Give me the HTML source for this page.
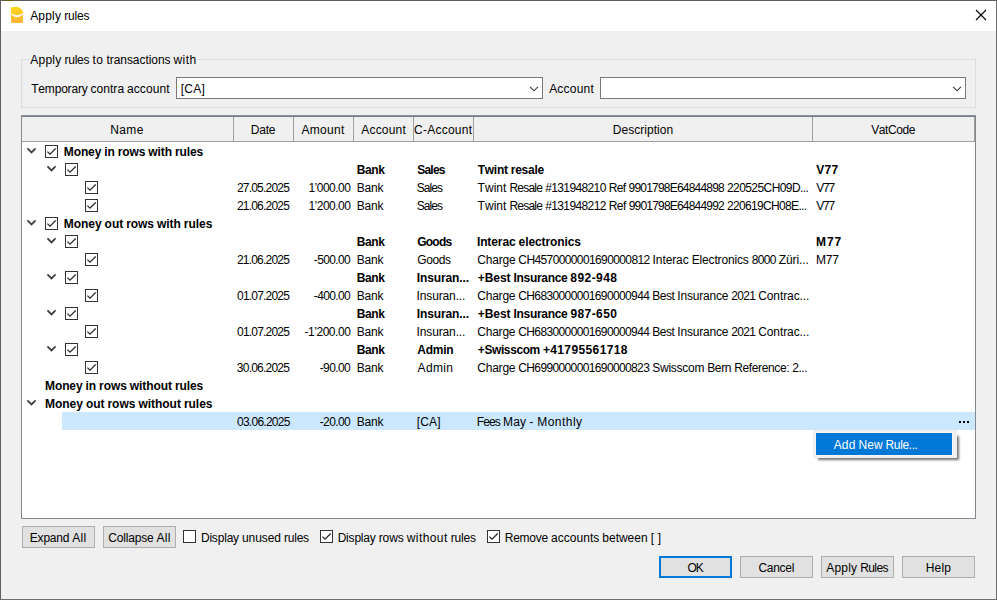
<!DOCTYPE html>
<html><head><meta charset="utf-8"><title>Apply rules</title>
<style>
html,body{margin:0;padding:0}
body{width:997px;height:600px;position:relative;overflow:hidden;background:#f0f0f0;font-family:"Liberation Sans",sans-serif;font-size:12.0px}
.a{position:absolute;display:block}
.t i{font-style:normal}
.t{font-kerning:none;position:absolute;white-space:pre;line-height:16px;height:16px;color:#000;transform-origin:0 0;font-family:"Liberation Sans",sans-serif;font-size:12.0px}
.btn{position:absolute;box-sizing:border-box;background:#e1e1e1;border:1px solid #adadad;height:22px;width:73px}
.combo{position:absolute;box-sizing:border-box;background:#fff;border:1px solid #7a7a7a;height:22px;top:77px}
.hs{position:absolute;top:117px;width:1px;height:24px;background:#a0a0a0}
</style></head><body>
<!-- window frame -->
<div class="a" style="left:0;top:0;width:997px;height:31px;background:#fff"></div>
<div class="a" style="left:0;top:0;width:997px;height:1px;background:#5c5c5c"></div>
<div class="a" style="left:4px;top:0;width:10px;height:1px;background:#6b5a12"></div>
<div class="a" style="left:0;top:0;width:1px;height:600px;background:#5f5f5f"></div>
<div class="a" style="left:996px;top:0;width:1px;height:600px;background:#6d6d6d"></div>
<div class="a" style="left:0;top:599px;width:997px;height:1px;background:#6d6d6d"></div>
<!-- app icon -->
<svg class="a" style="left:11px;top:7px" width="12" height="16" viewBox="0 0 12 16">
<defs><linearGradient id="g" x1="0" y1="0" x2="0" y2="1"><stop offset="0" stop-color="#ffd41c"/><stop offset=".45" stop-color="#ffc828"/><stop offset="1" stop-color="#ffb43a"/></linearGradient></defs>
<path d="M1.2 0 H7.9 L12 4.1 V14.8 Q12 16 10.8 16 H1.2 Q0 16 0 14.8 V1.2 Q0 0 1.2 0 Z" fill="url(#g)"/>
<path d="M0 6.3 Q6 10.1 12 6.3 V7.6 Q6 12.9 0 7.6 Z" fill="#fff"/>
</svg>
<!-- close X -->
<svg class="a" style="left:975px;top:9px" width="12" height="12" viewBox="0 0 12 12"><path d="M1 1 L11 11 M11 1 L1 11" stroke="#000" stroke-width="1.1" fill="none"/></svg>
<!-- group box -->
<div class="a" style="left:21px;top:59px;width:955px;height:49px;box-sizing:border-box;border:1px solid #dcdcdc"></div>
<div class="a" style="left:29px;top:52px;width:169px;height:14px;background:#f0f0f0"></div>
<div class="combo" style="left:176px;width:367px"></div>
<div class="combo" style="left:600px;width:366px"></div>
<svg class="a" style="left:529px;top:86px" width="10" height="6" viewBox="0 0 10 6"><path d="M1.1 .9 L5 4.8 L8.9 .9" fill="none" stroke="#3a3a3a" stroke-width="1.15"/></svg>
<svg class="a" style="left:952px;top:86px" width="10" height="6" viewBox="0 0 10 6"><path d="M1.1 .9 L5 4.8 L8.9 .9" fill="none" stroke="#3a3a3a" stroke-width="1.15"/></svg>
<!-- tree -->
<div class="a" style="left:21px;top:115px;width:955px;height:404px;box-sizing:border-box;background:#fff;border:1px solid #828790;border-top:2px solid #767c86"></div>
<div class="a" style="left:21px;top:115px;width:955px;height:1px;background:#8d9299"></div>
<div class="a" style="left:22px;top:117px;width:953px;height:24px;background:#f0f0f0"></div>
<div class="a" style="left:22px;top:141px;width:953px;height:1px;background:#a0a0a0"></div>
<div class="hs" style="left:233px"></div><div class="hs" style="left:293px"></div><div class="hs" style="left:353px"></div><div class="hs" style="left:413px"></div><div class="hs" style="left:473px"></div><div class="hs" style="left:812px"></div><div class="hs" style="left:974px"></div>
<!-- selected row -->
<div class="a" style="left:62px;top:412px;width:913px;height:18px;background:#cce8ff"></div>
<div class="a" style="left:959px;top:421px;width:2px;height:2px;background:#000"></div>
<div class="a" style="left:963px;top:421px;width:2px;height:2px;background:#000"></div>
<div class="a" style="left:967px;top:421px;width:2px;height:2px;background:#000"></div>
<!-- popup -->
<div class="a" style="left:818px;top:436px;width:141px;height:24px;background:rgba(0,0,0,.55);filter:blur(1px)"></div>
<div class="a" style="left:813px;top:430px;width:144px;height:28px;background:#f0f0f0"></div>
<div class="a" style="left:815px;top:432px;width:138px;height:24px;background:#fbf4ec"></div>
<div class="a" style="left:816px;top:433px;width:136px;height:22px;background:#0078d7"></div>
<!-- buttons -->
<div class="btn" style="left:22px;top:526px"></div>
<div class="btn" style="left:103px;top:526px"></div>
<div class="btn" style="left:659px;top:556px;border:2px solid #0078d7"></div>
<div class="btn" style="left:740px;top:556px"></div>
<div class="btn" style="left:821px;top:556px"></div>
<div class="btn" style="left:902px;top:556px"></div>
<svg class="a" style="left:26px;top:147px" width="11" height="8" viewBox="0 0 11 8"><path d="M1.95 1.85 L5.5 5.4 L9.05 1.85" fill="none" stroke="#3c3c3c" stroke-width="1.75" stroke-linecap="round" stroke-linejoin="miter"/></svg>
<svg class="a" style="left:45px;top:145px" width="13" height="13" viewBox="0 0 13 13"><rect x=".5" y=".5" width="12" height="12" fill="#fff" stroke="#333"/><path d="M2.4 6.6 L5 9.2 L10.7 3.5" fill="none" stroke="#2b2b2b" stroke-width="1.3"/></svg>
<svg class="a" style="left:46px;top:165px" width="11" height="8" viewBox="0 0 11 8"><path d="M1.95 1.85 L5.5 5.4 L9.05 1.85" fill="none" stroke="#3c3c3c" stroke-width="1.75" stroke-linecap="round" stroke-linejoin="miter"/></svg>
<svg class="a" style="left:65px;top:163px" width="13" height="13" viewBox="0 0 13 13"><rect x=".5" y=".5" width="12" height="12" fill="#fff" stroke="#333"/><path d="M2.4 6.6 L5 9.2 L10.7 3.5" fill="none" stroke="#2b2b2b" stroke-width="1.3"/></svg>
<svg class="a" style="left:85px;top:181px" width="13" height="13" viewBox="0 0 13 13"><rect x=".5" y=".5" width="12" height="12" fill="#fff" stroke="#333"/><path d="M2.4 6.6 L5 9.2 L10.7 3.5" fill="none" stroke="#2b2b2b" stroke-width="1.3"/></svg>
<svg class="a" style="left:85px;top:199px" width="13" height="13" viewBox="0 0 13 13"><rect x=".5" y=".5" width="12" height="12" fill="#fff" stroke="#333"/><path d="M2.4 6.6 L5 9.2 L10.7 3.5" fill="none" stroke="#2b2b2b" stroke-width="1.3"/></svg>
<svg class="a" style="left:26px;top:219px" width="11" height="8" viewBox="0 0 11 8"><path d="M1.95 1.85 L5.5 5.4 L9.05 1.85" fill="none" stroke="#3c3c3c" stroke-width="1.75" stroke-linecap="round" stroke-linejoin="miter"/></svg>
<svg class="a" style="left:45px;top:217px" width="13" height="13" viewBox="0 0 13 13"><rect x=".5" y=".5" width="12" height="12" fill="#fff" stroke="#333"/><path d="M2.4 6.6 L5 9.2 L10.7 3.5" fill="none" stroke="#2b2b2b" stroke-width="1.3"/></svg>
<svg class="a" style="left:46px;top:237px" width="11" height="8" viewBox="0 0 11 8"><path d="M1.95 1.85 L5.5 5.4 L9.05 1.85" fill="none" stroke="#3c3c3c" stroke-width="1.75" stroke-linecap="round" stroke-linejoin="miter"/></svg>
<svg class="a" style="left:65px;top:235px" width="13" height="13" viewBox="0 0 13 13"><rect x=".5" y=".5" width="12" height="12" fill="#fff" stroke="#333"/><path d="M2.4 6.6 L5 9.2 L10.7 3.5" fill="none" stroke="#2b2b2b" stroke-width="1.3"/></svg>
<svg class="a" style="left:85px;top:253px" width="13" height="13" viewBox="0 0 13 13"><rect x=".5" y=".5" width="12" height="12" fill="#fff" stroke="#333"/><path d="M2.4 6.6 L5 9.2 L10.7 3.5" fill="none" stroke="#2b2b2b" stroke-width="1.3"/></svg>
<svg class="a" style="left:46px;top:273px" width="11" height="8" viewBox="0 0 11 8"><path d="M1.95 1.85 L5.5 5.4 L9.05 1.85" fill="none" stroke="#3c3c3c" stroke-width="1.75" stroke-linecap="round" stroke-linejoin="miter"/></svg>
<svg class="a" style="left:65px;top:271px" width="13" height="13" viewBox="0 0 13 13"><rect x=".5" y=".5" width="12" height="12" fill="#fff" stroke="#333"/><path d="M2.4 6.6 L5 9.2 L10.7 3.5" fill="none" stroke="#2b2b2b" stroke-width="1.3"/></svg>
<svg class="a" style="left:85px;top:289px" width="13" height="13" viewBox="0 0 13 13"><rect x=".5" y=".5" width="12" height="12" fill="#fff" stroke="#333"/><path d="M2.4 6.6 L5 9.2 L10.7 3.5" fill="none" stroke="#2b2b2b" stroke-width="1.3"/></svg>
<svg class="a" style="left:46px;top:309px" width="11" height="8" viewBox="0 0 11 8"><path d="M1.95 1.85 L5.5 5.4 L9.05 1.85" fill="none" stroke="#3c3c3c" stroke-width="1.75" stroke-linecap="round" stroke-linejoin="miter"/></svg>
<svg class="a" style="left:65px;top:307px" width="13" height="13" viewBox="0 0 13 13"><rect x=".5" y=".5" width="12" height="12" fill="#fff" stroke="#333"/><path d="M2.4 6.6 L5 9.2 L10.7 3.5" fill="none" stroke="#2b2b2b" stroke-width="1.3"/></svg>
<svg class="a" style="left:85px;top:325px" width="13" height="13" viewBox="0 0 13 13"><rect x=".5" y=".5" width="12" height="12" fill="#fff" stroke="#333"/><path d="M2.4 6.6 L5 9.2 L10.7 3.5" fill="none" stroke="#2b2b2b" stroke-width="1.3"/></svg>
<svg class="a" style="left:46px;top:345px" width="11" height="8" viewBox="0 0 11 8"><path d="M1.95 1.85 L5.5 5.4 L9.05 1.85" fill="none" stroke="#3c3c3c" stroke-width="1.75" stroke-linecap="round" stroke-linejoin="miter"/></svg>
<svg class="a" style="left:65px;top:343px" width="13" height="13" viewBox="0 0 13 13"><rect x=".5" y=".5" width="12" height="12" fill="#fff" stroke="#333"/><path d="M2.4 6.6 L5 9.2 L10.7 3.5" fill="none" stroke="#2b2b2b" stroke-width="1.3"/></svg>
<svg class="a" style="left:85px;top:361px" width="13" height="13" viewBox="0 0 13 13"><rect x=".5" y=".5" width="12" height="12" fill="#fff" stroke="#333"/><path d="M2.4 6.6 L5 9.2 L10.7 3.5" fill="none" stroke="#2b2b2b" stroke-width="1.3"/></svg>
<svg class="a" style="left:26px;top:399px" width="11" height="8" viewBox="0 0 11 8"><path d="M1.95 1.85 L5.5 5.4 L9.05 1.85" fill="none" stroke="#3c3c3c" stroke-width="1.75" stroke-linecap="round" stroke-linejoin="miter"/></svg>
<svg class="a" style="left:183px;top:530px" width="13" height="13" viewBox="0 0 13 13"><rect x=".5" y=".5" width="12" height="12" fill="#fff" stroke="#333"/></svg>
<svg class="a" style="left:320px;top:530px" width="13" height="13" viewBox="0 0 13 13"><rect x=".5" y=".5" width="12" height="12" fill="#fff" stroke="#333"/><path d="M2.4 6.6 L5 9.2 L10.7 3.5" fill="none" stroke="#2b2b2b" stroke-width="1.3"/></svg>
<svg class="a" style="left:487px;top:530px" width="13" height="13" viewBox="0 0 13 13"><rect x=".5" y=".5" width="12" height="12" fill="#fff" stroke="#333"/><path d="M2.4 6.6 L5 9.2 L10.7 3.5" fill="none" stroke="#2b2b2b" stroke-width="1.3"/></svg>
<span class="t" style="left:30.13px;top:8px"><i style="letter-spacing:0.203px;word-spacing:-0.534px">Apply </i><i style="letter-spacing:-0.196px">rules</i></span>
<span class="t" style="left:30.33px;top:52px"><i style="letter-spacing:0.203px;word-spacing:-0.534px">Apply </i><i style="letter-spacing:-0.196px;word-spacing:-0.135px">rules </i><i style="letter-spacing:0.502px;word-spacing:-0.833px">to </i><i style="letter-spacing:-0.052px;word-spacing:-0.279px">transactions </i><i style="letter-spacing:0.421px">with</i></span>
<span class="t" style="left:31.22px;top:81px"><i style="letter-spacing:-0.189px;word-spacing:-0.181px">Temporary </i><i style="letter-spacing:0.040px;word-spacing:-0.410px">contra </i><i style="letter-spacing:0.064px">account</i></span>
<span class="t" style="left:180.74px;top:81px;letter-spacing:0.241px">[CA]</span>
<span class="t" style="left:549.13px;top:81px;letter-spacing:0.223px">Account</span>
<span class="t" style="left:110.23px;top:122px;letter-spacing:0.387px">Name</span>
<span class="t" style="left:250.73px;top:122px;letter-spacing:-0.207px">Date</span>
<span class="t" style="left:301.43px;top:122px;letter-spacing:0.328px">Amount</span>
<span class="t" style="left:361.23px;top:122px;letter-spacing:0.206px">Account</span>
<span class="t" style="left:414.09px;top:122px;letter-spacing:0.241px">C-Account</span>
<span class="t" style="left:612.73px;top:122px;letter-spacing:0.035px">Description</span>
<span class="t" style="left:871.22px;top:122px;letter-spacing:-0.419px">VatCode</span>
<span class="t" style="left:63.80px;top:144px;font-weight:bold"><i style="letter-spacing:-0.121px;word-spacing:-0.213px">Money </i><i style="letter-spacing:-0.085px;word-spacing:-0.249px">in </i><i style="letter-spacing:-0.112px;word-spacing:-0.223px">rows </i><i style="letter-spacing:-0.096px;word-spacing:-0.239px">with </i><i style="letter-spacing:-0.091px">rules</i></span>
<span class="t" style="left:356.70px;top:162px;font-weight:bold;letter-spacing:-0.377px">Bank</span>
<span class="t" style="left:417.13px;top:162px;font-weight:bold;letter-spacing:-0.751px">Sales</span>
<span class="t" style="left:477.73px;top:162px;font-weight:bold"><i style="letter-spacing:-0.264px;word-spacing:-0.071px">Twint </i><i style="letter-spacing:-0.244px">resale</i></span>
<span class="t" style="left:816.23px;top:162px;font-weight:bold;letter-spacing:0.271px">V77</span>
<span class="t" style="left:236.90px;top:180px;letter-spacing:-0.787px">27.05.2025</span>
<span class="t" style="left:308.46px;top:180px;letter-spacing:-0.527px">1’000.00</span>
<span class="t" style="left:356.63px;top:180px;letter-spacing:-0.189px">Bank</span>
<span class="t" style="left:416.69px;top:180px;letter-spacing:-0.917px">Sales</span>
<span class="t" style="left:477.62px;top:180px"><i style="letter-spacing:0.026px;word-spacing:-0.381px">Twint </i><i style="letter-spacing:-0.763px;word-spacing:0.409px">Resale </i><i style="letter-spacing:-0.616px;word-spacing:0.261px">#131948210 </i><i style="letter-spacing:-0.597px;word-spacing:0.242px">Ref </i><i style="letter-spacing:-0.798px;word-spacing:0.443px">9901798E64844898 </i><i style="letter-spacing:-0.568px">220525CH09D...</i></span>
<span class="t" style="left:816.22px;top:180px;letter-spacing:-1.255px">V77</span>
<span class="t" style="left:236.90px;top:198px;letter-spacing:-0.787px">21.06.2025</span>
<span class="t" style="left:308.46px;top:198px;letter-spacing:-0.527px">1’200.00</span>
<span class="t" style="left:356.63px;top:198px;letter-spacing:-0.189px">Bank</span>
<span class="t" style="left:416.69px;top:198px;letter-spacing:-0.917px">Sales</span>
<span class="t" style="left:477.62px;top:198px"><i style="letter-spacing:0.027px;word-spacing:-0.381px">Twint </i><i style="letter-spacing:-0.763px;word-spacing:0.408px">Resale </i><i style="letter-spacing:-0.615px;word-spacing:0.261px">#131948212 </i><i style="letter-spacing:-0.596px;word-spacing:0.242px">Ref </i><i style="letter-spacing:-0.798px;word-spacing:0.443px">9901798E64844992 </i><i style="letter-spacing:-0.662px">220619CH08E...</i></span>
<span class="t" style="left:816.22px;top:198px;letter-spacing:-1.255px">V77</span>
<span class="t" style="left:63.80px;top:216px;font-weight:bold"><i style="letter-spacing:-0.044px;word-spacing:-0.290px">Money </i><i style="letter-spacing:-0.036px;word-spacing:-0.298px">out </i><i style="letter-spacing:-0.041px;word-spacing:-0.294px">rows </i><i style="letter-spacing:-0.035px;word-spacing:-0.300px">with </i><i style="letter-spacing:-0.033px">rules</i></span>
<span class="t" style="left:356.70px;top:234px;font-weight:bold;letter-spacing:-0.377px">Bank</span>
<span class="t" style="left:417.31px;top:234px;font-weight:bold;letter-spacing:-0.795px">Goods</span>
<span class="t" style="left:476.90px;top:234px;font-weight:bold"><i style="letter-spacing:-0.091px;word-spacing:-0.243px">Interac </i><i style="letter-spacing:-0.094px">electronics</i></span>
<span class="t" style="left:816.00px;top:234px;font-weight:bold;letter-spacing:0.955px">M77</span>
<span class="t" style="left:236.90px;top:252px;letter-spacing:-0.787px">21.06.2025</span>
<span class="t" style="left:313.85px;top:252px;letter-spacing:-0.647px">-500.00</span>
<span class="t" style="left:356.63px;top:252px;letter-spacing:-0.189px">Bank</span>
<span class="t" style="left:417.19px;top:252px;letter-spacing:-0.389px">Goods</span>
<span class="t" style="left:477.29px;top:252px"><i style="letter-spacing:-0.216px;word-spacing:-0.113px">Charge </i><i style="letter-spacing:-0.616px;word-spacing:0.286px">CH4570000001690000812 </i><i style="letter-spacing:-0.090px;word-spacing:-0.240px">Interac </i><i style="letter-spacing:-0.145px;word-spacing:-0.184px">Electronics </i><i style="letter-spacing:-0.664px;word-spacing:0.335px">8000 </i><i style="letter-spacing:-0.089px">Züri...</i></span>
<span class="t" style="left:815.93px;top:252px;letter-spacing:-0.203px">M77</span>
<span class="t" style="left:356.70px;top:270px;font-weight:bold;letter-spacing:-0.377px">Bank</span>
<span class="t" style="left:416.80px;top:270px;font-weight:bold;letter-spacing:-0.118px">Insuran...</span>
<span class="t" style="left:477.82px;top:270px;font-weight:bold"><i style="letter-spacing:-0.063px;word-spacing:-0.271px">+Best </i><i style="letter-spacing:-0.317px;word-spacing:-0.017px">Insurance </i><i style="letter-spacing:0.423px">892-948</i></span>
<span class="t" style="left:237.02px;top:288px;letter-spacing:-0.800px">01.07.2025</span>
<span class="t" style="left:313.85px;top:288px;letter-spacing:-0.647px">-400.00</span>
<span class="t" style="left:356.63px;top:288px;letter-spacing:-0.189px">Bank</span>
<span class="t" style="left:416.60px;top:288px;letter-spacing:-0.139px">Insuran...</span>
<span class="t" style="left:477.29px;top:288px"><i style="letter-spacing:-0.228px;word-spacing:-0.107px">Charge </i><i style="letter-spacing:-0.627px;word-spacing:0.292px">CH6830000001690000944 </i><i style="letter-spacing:-0.505px;word-spacing:0.169px">Best </i><i style="letter-spacing:-0.191px;word-spacing:-0.145px">Insurance </i><i style="letter-spacing:-0.676px;word-spacing:0.341px">2021 </i><i style="letter-spacing:-0.104px">Contrac...</i></span>
<span class="t" style="left:356.70px;top:306px;font-weight:bold;letter-spacing:-0.377px">Bank</span>
<span class="t" style="left:416.80px;top:306px;font-weight:bold;letter-spacing:-0.118px">Insuran...</span>
<span class="t" style="left:477.82px;top:306px;font-weight:bold"><i style="letter-spacing:-0.060px;word-spacing:-0.274px">+Best </i><i style="letter-spacing:-0.314px;word-spacing:-0.021px">Insurance </i><i style="letter-spacing:0.423px">987-650</i></span>
<span class="t" style="left:237.02px;top:324px;letter-spacing:-0.800px">01.07.2025</span>
<span class="t" style="left:304.55px;top:324px;letter-spacing:-0.473px">-1’200.00</span>
<span class="t" style="left:356.63px;top:324px;letter-spacing:-0.189px">Bank</span>
<span class="t" style="left:416.60px;top:324px;letter-spacing:-0.139px">Insuran...</span>
<span class="t" style="left:477.29px;top:324px"><i style="letter-spacing:-0.228px;word-spacing:-0.107px">Charge </i><i style="letter-spacing:-0.627px;word-spacing:0.292px">CH6830000001690000944 </i><i style="letter-spacing:-0.505px;word-spacing:0.169px">Best </i><i style="letter-spacing:-0.191px;word-spacing:-0.145px">Insurance </i><i style="letter-spacing:-0.676px;word-spacing:0.341px">2021 </i><i style="letter-spacing:-0.104px">Contrac...</i></span>
<span class="t" style="left:356.70px;top:342px;font-weight:bold;letter-spacing:-0.377px">Bank</span>
<span class="t" style="left:417.35px;top:342px;font-weight:bold;letter-spacing:-0.286px">Admin</span>
<span class="t" style="left:477.82px;top:342px;font-weight:bold"><i style="letter-spacing:-0.406px;word-spacing:0.072px">+Swisscom </i><i style="letter-spacing:0.381px">+41795561718</i></span>
<span class="t" style="left:236.86px;top:360px;letter-spacing:-0.783px">30.06.2025</span>
<span class="t" style="left:319.65px;top:360px;letter-spacing:-0.575px">-90.00</span>
<span class="t" style="left:356.63px;top:360px;letter-spacing:-0.189px">Bank</span>
<span class="t" style="left:417.53px;top:360px;letter-spacing:0.359px">Admin</span>
<span class="t" style="left:477.29px;top:360px"><i style="letter-spacing:-0.229px;word-spacing:-0.107px">Charge </i><i style="letter-spacing:-0.628px;word-spacing:0.293px">CH6990000001690000823 </i><i style="letter-spacing:-0.253px;word-spacing:-0.082px">Swisscom </i><i style="letter-spacing:-0.339px;word-spacing:0.004px">Bern </i><i style="letter-spacing:-0.372px;word-spacing:0.037px">Reference: </i><i style="letter-spacing:-0.421px">2...</i></span>
<span class="t" style="left:45.00px;top:378px;font-weight:bold"><i style="letter-spacing:-0.094px;word-spacing:-0.240px">Money </i><i style="letter-spacing:-0.066px;word-spacing:-0.268px">in </i><i style="letter-spacing:-0.087px;word-spacing:-0.247px">rows </i><i style="letter-spacing:-0.076px;word-spacing:-0.259px">without </i><i style="letter-spacing:-0.071px">rules</i></span>
<span class="t" style="left:45.00px;top:396px;font-weight:bold"><i style="letter-spacing:-0.028px;word-spacing:-0.306px">Money </i><i style="letter-spacing:-0.023px;word-spacing:-0.311px">out </i><i style="letter-spacing:-0.026px;word-spacing:-0.308px">rows </i><i style="letter-spacing:-0.023px;word-spacing:-0.312px">without </i><i style="letter-spacing:-0.021px">rules</i></span>
<span class="t" style="left:237.02px;top:414px;letter-spacing:-0.745px">03.06.2025</span>
<span class="t" style="left:319.65px;top:414px;letter-spacing:-0.575px">-20.00</span>
<span class="t" style="left:356.63px;top:414px;letter-spacing:-0.189px">Bank</span>
<span class="t" style="left:416.74px;top:414px;letter-spacing:0.142px">[CA]</span>
<span class="t" style="left:476.83px;top:414px"><i style="letter-spacing:-0.882px;word-spacing:0.567px">Fees </i><i style="letter-spacing:0.160px;word-spacing:-0.475px">May </i><i style="letter-spacing:1.037px;word-spacing:-1.351px">- </i><i style="letter-spacing:0.468px">Monthly</i></span>
<span class="t" style="left:833.63px;top:437px;color:#fff"><i style="letter-spacing:0.209px;word-spacing:-0.546px">Add </i><i style="letter-spacing:-0.010px;word-spacing:-0.327px">New </i><i style="letter-spacing:-0.388px">Rule...</i></span>
<span class="t" style="left:29.83px;top:530px"><i style="letter-spacing:-0.225px;word-spacing:-0.083px">Expand </i><i style="letter-spacing:0.263px">All</i></span>
<span class="t" style="left:108.19px;top:530px"><i style="letter-spacing:-0.172px;word-spacing:-0.141px">Collapse </i><i style="letter-spacing:0.254px">All</i></span>
<span class="t" style="left:200.93px;top:530px"><i style="letter-spacing:-0.193px;word-spacing:-0.142px">Display </i><i style="letter-spacing:-0.062px;word-spacing:-0.272px">unused </i><i style="letter-spacing:-0.202px">rules</i></span>
<span class="t" style="left:337.63px;top:530px"><i style="letter-spacing:-0.189px;word-spacing:-0.143px">Display </i><i style="letter-spacing:-0.080px;word-spacing:-0.252px">rows </i><i style="letter-spacing:0.429px;word-spacing:-0.761px">without </i><i style="letter-spacing:-0.199px">rules</i></span>
<span class="t" style="left:504.73px;top:530px"><i style="letter-spacing:-0.236px;word-spacing:-0.079px">Remove </i><i style="letter-spacing:0.033px;word-spacing:-0.349px">accounts </i><i style="letter-spacing:-0.013px;word-spacing:-0.303px">between </i><i style="letter-spacing:0.690px;word-spacing:-1.006px">[ </i><i style="letter-spacing:0.690px">]</i></span>
<span class="t" style="left:687.44px;top:560px;letter-spacing:-1.068px">OK</span>
<span class="t" style="left:758.39px;top:560px;letter-spacing:-0.256px">Cancel</span>
<span class="t" style="left:826.33px;top:560px"><i style="letter-spacing:0.158px;word-spacing:-0.511px">Apply </i><i style="letter-spacing:-0.571px">Rules</i></span>
<span class="t" style="left:925.63px;top:560px;letter-spacing:0.246px">Help</span>
</body></html>
